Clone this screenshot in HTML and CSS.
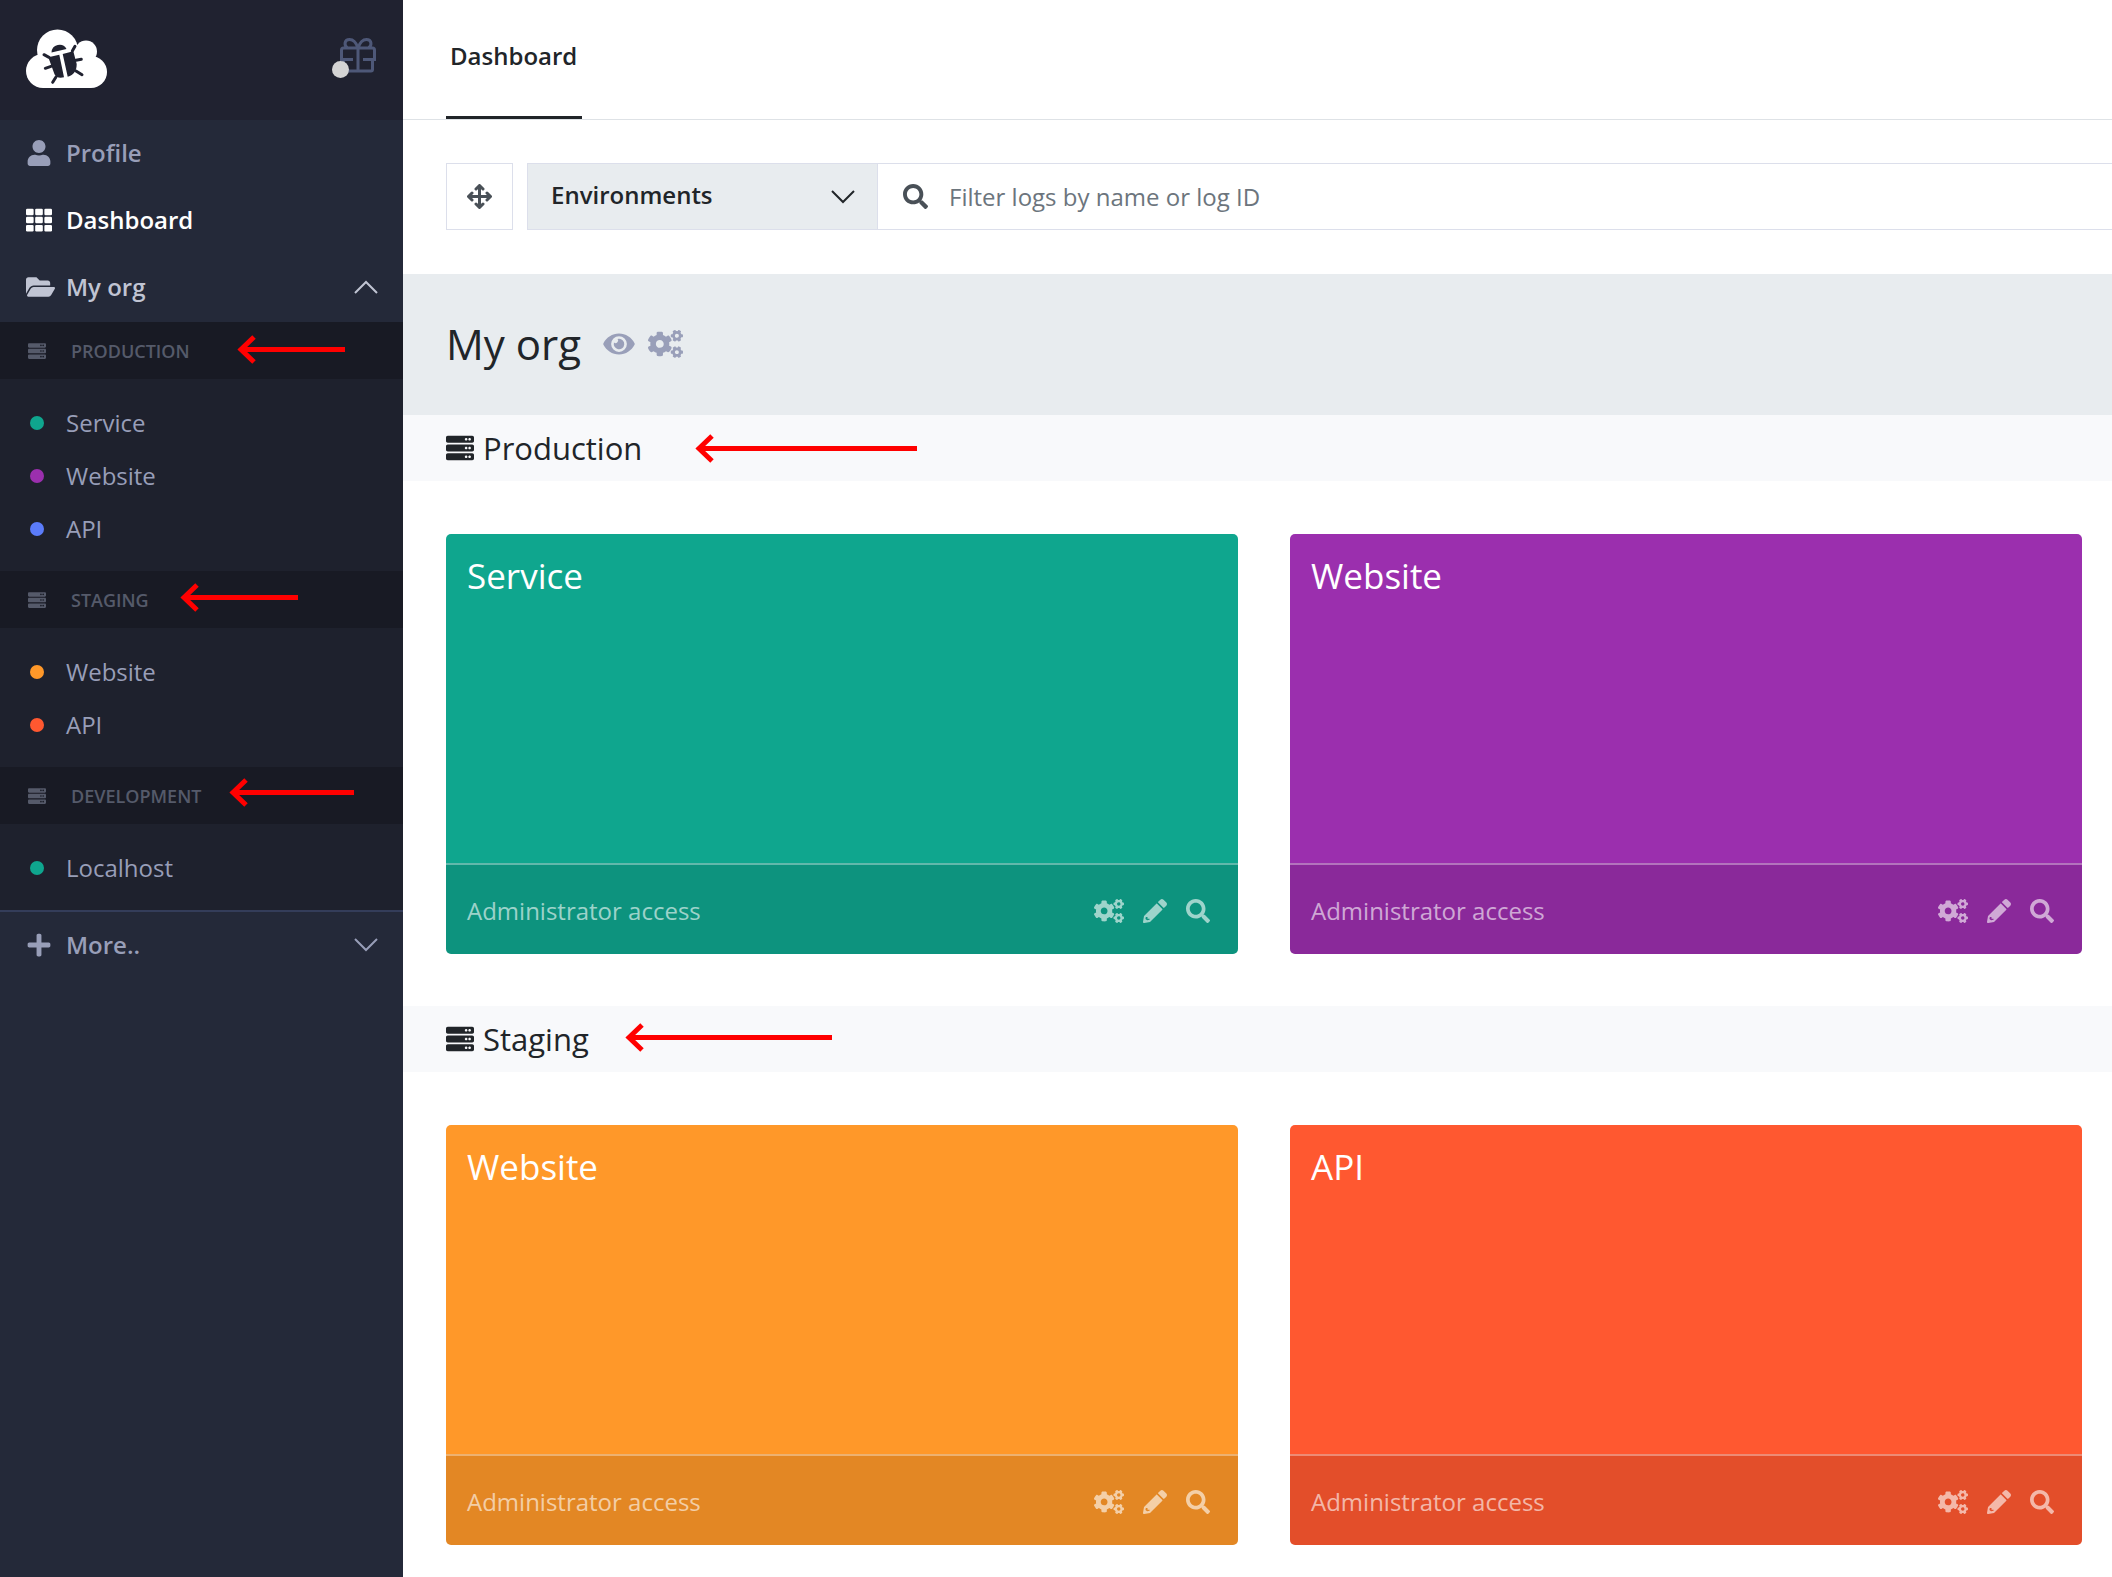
FILE: index.html
```html
<!DOCTYPE html>
<html lang="en">
<head>
<meta charset="utf-8">
<title>Dashboard</title>
<link rel="stylesheet" href="styles.css">
</head>
<body>
<svg class="sprite" aria-hidden="true">
  <symbol id="i-user" viewBox="0 0 448 512"><path d="M224 256c70.700 0 128-57.300 128-128S294.700 0 224 0 96 57.300 96 128s57.300 128 128 128zm89.600 32h-16.700c-22.200 10.200-46.900 16-72.900 16s-50.600-5.800-72.900-16h-16.700C60.200 288 0 348.200 0 422.400V464c0 26.500 21.500 48 48 48h352c26.500 0 48-21.500 48-48v-41.600c0-74.200-60.200-134.400-134.400-134.400z"/></symbol>
  <symbol id="i-grid" viewBox="0 0 512 512"><g id="grid-row"><rect y="32" width="150" height="128" rx="24"/><rect x="181" y="32" width="150" height="128" rx="24"/><rect x="362" y="32" width="150" height="128" rx="24"/></g><use href="#grid-row" y="160"/><use href="#grid-row" y="320"/></symbol>
  <symbol id="i-folder" viewBox="0 0 576 512"><path d="M572.694 292.093L500.270 416.248A63.997 63.997 0 0 1 444.989 448H45.025c-18.523 0-30.064-20.093-20.731-36.093l72.424-124.155A64 64 0 0 1 152 256h399.964c18.523 0 30.064 20.093 20.730 36.093zM152 224h328v-48c0-26.510-21.490-48-48-48H272l-64-64H48C21.490 64 0 85.490 0 112v278.046l69.077-118.418C86.214 242.250 117.989 224 152 224z"/></symbol>
  <symbol id="i-plus" viewBox="0 0 448 512"><path d="M416 208H272V64c0-17.670-14.330-32-32-32h-32c-17.670 0-32 14.330-32 32v144H32c-17.670 0-32 14.330-32 32v32c0 17.670 14.330 32 32 32h144v144c0 17.670 14.330 32 32 32h32c17.670 0 32-14.330 32-32V304h144c17.670 0 32-14.330 32-32v-32c0-17.670-14.330-32-32-32z"/></symbol>
  <symbol id="i-server" viewBox="0 0 512 512"><g id="server-unit"><path d="M480 160H32c-17.673 0-32-14.327-32-32V64c0-17.673 14.327-32 32-32h448c17.673 0 32 14.327 32 32v64c0 17.673-14.327 32-32 32zm-48-88c-13.255 0-24 10.745-24 24s10.745 24 24 24 24-10.745 24-24-10.745-24-24-24zm-64 0c-13.255 0-24 10.745-24 24s10.745 24 24 24 24-10.745 24-24-10.745-24-24-24z"/></g><use href="#server-unit" y="160"/><use href="#server-unit" y="320"/></symbol>
  <symbol id="i-search" viewBox="0 0 512 512"><path d="M505 442.700L405.300 343c-4.500-4.500-10.600-7-17-7H372c27.600-35.300 44-79.700 44-128C416 93.100 322.900 0 208 0S0 93.100 0 208s93.100 208 208 208c48.300 0 92.700-16.400 128-44v16.300c0 6.400 2.500 12.500 7 17l99.700 99.700c9.400 9.400 24.600 9.400 33.900 0l28.300-28.300c9.400-9.400 9.400-24.600.1-34zM208 336c-70.700 0-128-57.200-128-128 0-70.700 57.200-128 128-128 70.700 0 128 57.200 128 128 0 70.700-57.200 128-128 128z"/></symbol>
  <symbol id="i-eye" viewBox="0 0 576 512"><path d="M572.520 241.400C518.290 135.590 410.930 64 288 64S57.680 135.640 3.480 241.410a32.350 32.350 0 0 0 0 29.190C57.710 376.410 165.070 448 288 448s230.320-71.640 284.520-177.410a32.350 32.350 0 0 0 0-29.190zM288 400a144 144 0 1 1 144-144 143.930 143.930 0 0 1-144 144zm0-240a95.310 95.310 0 0 0-25.310 3.790 47.850 47.850 0 0 1-66.900 66.900A95.780 95.780 0 1 0 288 160z"/></symbol>
  <symbol id="i-cogs" viewBox="0 0 640 512"><path id="small-cog" d="M512.100 191l-8.200 14.300c-3 5.300-9.400 7.500-15.100 5.400-11.800-4.400-22.600-10.700-32.100-18.600-4.600-3.800-5.800-10.500-2.800-15.700l8.200-14.300c-6.900-8-12.300-17.300-15.900-27.400h-16.500c-6 0-11.200-4.300-12.200-10.300-2-12-2.100-24.600 0-37.100 1-6 6.200-10.400 12.200-10.400h16.500c3.600-10.100 9-19.400 15.900-27.400l-8.200-14.300c-3-5.200-1.900-11.900 2.800-15.700 9.500-7.900 20.400-14.200 32.100-18.600 5.700-2.100 12.100.1 15.100 5.400l8.200 14.300c10.500-1.900 21.200-1.900 31.700 0L552 6.300c3-5.300 9.400-7.500 15.100-5.400 11.800 4.400 22.600 10.700 32.100 18.600 4.600 3.800 5.800 10.500 2.800 15.700l-8.200 14.300c6.900 8 12.300 17.300 15.900 27.400h16.500c6 0 11.200 4.300 12.200 10.300 2 12 2.100 24.600 0 37.100-1 6-6.200 10.400-12.200 10.400h-16.500c-3.600 10.100-9 19.400-15.900 27.400l8.200 14.300c3 5.200 1.900 11.900-2.800 15.700-9.500 7.900-20.400 14.200-32.100 18.600-5.700 2.100-12.100-.1-15.100-5.400l-8.200-14.300c-10.400 1.900-21.200 1.900-31.700 0zm-10.500-58.800c38.500 29.600 82.400-14.300 52.800-52.800-38.500-29.700-82.400 14.300-52.800 52.800z"/><use href="#small-cog" y="299"/><path d="M386.300 286.100l33.700 16.800c10.100 5.800 14.500 18.100 10.500 29.100-8.900 24.200-26.400 46.400-42.600 65.800-7.400 8.900-20.200 11.100-30.300 5.300l-29.100-16.800c-16 13.700-34.600 24.600-54.900 31.700v33.600c0 11.600-8.300 21.600-19.700 23.600-24.600 4.200-50.400 4.400-75.900 0-11.500-2-20-11.900-20-23.600V418c-20.300-7.200-38.900-18-54.900-31.700L74 403c-10 5.800-22.900 3.600-30.300-5.300-16.200-19.400-33.300-41.600-42.200-65.700-4-10.900.4-23.200 10.500-29.100l33.300-16.800c-3.900-20.900-3.900-42.400 0-63.400L12 205.800c-10.100-5.800-14.600-18.100-10.500-29 8.900-24.200 26-46.400 42.200-65.800 7.400-8.900 20.200-11.100 30.300-5.300l29.100 16.800c16-13.700 34.600-24.600 54.900-31.700V57.100c0-11.500 8.200-21.500 19.600-23.500 24.600-4.200 50.500-4.400 76-.1 11.500 2 20 11.900 20 23.600v33.600c20.300 7.200 38.900 18 54.900 31.700l29.100-16.800c10-5.800 22.900-3.600 30.300 5.300 16.200 19.400 33.200 41.600 42.100 65.800 4 10.900.1 23.200-10 29.100l-33.700 16.800c3.900 21 3.900 42.500 0 63.500zm-117.600 21.100c59.200-77-28.700-164.900-105.700-105.700-59.200 77 28.700 164.900 105.700 105.700z"/></symbol>
  <symbol id="i-pencil" viewBox="0 0 512 512"><path fill-rule="evenodd" d="M497.900 142.100l-46.100 46.100c-4.700 4.700-12.300 4.700-17 0l-111-111c-4.700-4.700-4.700-12.300 0-17l46.100-46.100c18.700-18.700 49.100-18.700 67.900 0l60.100 60.100c18.800 18.700 18.800 49.100 0 67.900zM284.200 99.800L21.600 362.400.4 483.900c-2.900 16.400 11.400 30.600 27.800 27.800l121.500-21.300 262.600-262.600c4.700-4.700 4.700-12.300 0-17l-111-111c-4.800-4.700-12.400-4.700-17.100 0zM60 384h36v36h44v24l-52 10-36-28z"/></symbol>
  <symbol id="i-move" viewBox="0 0 25 25"><g fill="none" stroke="currentColor" stroke-linecap="round" stroke-linejoin="round" stroke-width="3"><path d="M12.500 3v19M3 12.500h19M9 5l3.500-3.500L16 5M9 20l3.500 3.500L16 20M5 9l-3.500 3.500L5 16M20 9l3.500 3.500L20 16"/></g></symbol>
  <symbol id="i-chevron" viewBox="0 0 24 14"><path d="M1 1l11 11L23 1" fill="none" stroke="currentColor"/></symbol>
</svg>

<div class="app">
  <aside class="sidebar">
    <header class="brand">
      <a href="#" class="logo" aria-label="Home">
        <svg width="82" height="60" viewBox="0 0 82 60">
          <g fill="#fff"><circle cx="17" cy="42" r="17"/><circle cx="31.500" cy="21" r="20.500"/><circle cx="60" cy="22.500" r="11"/><circle cx="65" cy="43" r="16"/><path d="M17 59V30l20-12 23 12 5 29z"/></g>
          <path fill="#202230" d="M25.500 23.500A8 8 0 0 1 40.500 20zM22.300 28.300l11-2.600 4.700 22.600c-5 1-8 0-9.500-3zM36.700 25l10.600-2.700L50.700 35c0 7-3 11-9 12.700z"/>
          <path fill="none" stroke="#202230" stroke-width="3" stroke-linecap="round" d="M18 25.700l5 2.600M19.300 39.300l5.700-2M26.700 53.300L30 48M49 17.300L46.300 22M55.300 30.300l-5.300 1M56 45.700L50 42"/>
        </svg>
      </a>
      <button class="gift" aria-label="What's new">
        <svg width="38" height="36" viewBox="0 0 38 36"><path fill="none" stroke="currentColor" stroke-width="3" d="M14 22.500H2.500V13q0-2 2-2h29q2 0 2 2v9.500H24M4.500 23v9.500q0 1.500 1.500 1.500h26q1.500 0 1.500-1.500V23M19 11v23M19 11C17 5 14 2.500 10.500 2.500 5.500 2.500 4.500 8 8.500 11M19 11c2-6 5-8.500 8.500-8.500 5 0 6 5.500 2 8.500"/></svg>
        <span class="gift-dot"></span>
      </button>
    </header>

    <nav class="menu">
      <a href="#" class="menu-item"><svg class="menu-icon"><use href="#i-user"/></svg>Profile</a>
      <a href="#" class="menu-item active"><svg class="menu-icon"><use href="#i-grid"/></svg>Dashboard</a>
      <a href="#" class="menu-item open"><svg class="menu-icon wide"><use href="#i-folder"/></svg>My org<svg class="caret up"><use href="#i-chevron"/></svg></a>
    </nav>

    <section class="env">
      <h2 class="env-title"><svg class="env-icon"><use href="#i-server"/></svg>Production
        <svg class="arrow arrow-side-1" width="108" height="29" viewBox="0 0 108 29"><path d="M4 14.500H108M17 2L4 14.500 17 27"/></svg></h2>
      <ul class="env-list">
        <li><a href="#"><span class="dot green"></span>Service</a></li>
        <li><a href="#"><span class="dot purple"></span>Website</a></li>
        <li><a href="#"><span class="dot blue"></span>API</a></li>
      </ul>
    </section>
    <section class="env">
      <h2 class="env-title"><svg class="env-icon"><use href="#i-server"/></svg>Staging
        <svg class="arrow arrow-side-2" width="118" height="29" viewBox="0 0 118 29"><path d="M4 14.500H118M17 2L4 14.500 17 27"/></svg></h2>
      <ul class="env-list">
        <li><a href="#"><span class="dot orange"></span>Website</a></li>
        <li><a href="#"><span class="dot red"></span>API</a></li>
      </ul>
    </section>
    <section class="env">
      <h2 class="env-title"><svg class="env-icon"><use href="#i-server"/></svg>Development
        <svg class="arrow arrow-side-3" width="125" height="29" viewBox="0 0 125 29"><path d="M4 14.500H125M17 2L4 14.500 17 27"/></svg></h2>
      <ul class="env-list">
        <li><a href="#"><span class="dot green"></span>Localhost</a></li>
      </ul>
    </section>
    <div class="more">
      <a href="#" class="menu-item"><svg class="menu-icon"><use href="#i-plus"/></svg>More..<svg class="caret"><use href="#i-chevron"/></svg></a>
    </div>
  </aside>

  <main class="main">
    <header class="tabs"><a href="#" class="tab">Dashboard</a></header>

    <div class="toolbar">
      <button class="move" aria-label="Rearrange"><svg><use href="#i-move"/></svg></button>
      <div class="filter">
        <div class="picker">
          <select aria-label="Environments"><option>Environments</option></select>
          <svg class="caret"><use href="#i-chevron"/></svg>
        </div>
        <label class="search"><svg><use href="#i-search"/></svg><input type="text" aria-label="Filter logs" placeholder="Filter logs by name or log ID"></label>
      </div>
    </div>

    <div class="org">
      <h1>My org</h1>
      <a href="#" aria-label="View"><svg class="org-eye"><use href="#i-eye"/></svg></a>
      <a href="#" aria-label="Settings"><svg class="org-cogs"><use href="#i-cogs"/></svg></a>
    </div>

    <h2 class="group"><svg class="group-icon"><use href="#i-server"/></svg>Production
      <svg class="arrow arrow-main-1" width="222" height="29" viewBox="0 0 222 29"><path d="M4 14.500H222M17 2L4 14.500 17 27"/></svg></h2>
    <div class="cards">
      <article class="card green">
        <h3>Service</h3>
        <footer><span>Administrator access</span><a href="#" aria-label="Settings"><svg class="wide"><use href="#i-cogs"/></svg></a><a href="#" aria-label="Edit"><svg><use href="#i-pencil"/></svg></a><a href="#" aria-label="Search"><svg><use href="#i-search"/></svg></a></footer>
      </article>
      <article class="card purple">
        <h3>Website</h3>
        <footer><span>Administrator access</span><a href="#" aria-label="Settings"><svg class="wide"><use href="#i-cogs"/></svg></a><a href="#" aria-label="Edit"><svg><use href="#i-pencil"/></svg></a><a href="#" aria-label="Search"><svg><use href="#i-search"/></svg></a></footer>
      </article>
    </div>

    <h2 class="group"><svg class="group-icon"><use href="#i-server"/></svg>Staging
      <svg class="arrow arrow-main-2" width="207" height="29" viewBox="0 0 207 29"><path d="M4 14.500H207M17 2L4 14.500 17 27"/></svg></h2>
    <div class="cards">
      <article class="card orange">
        <h3>Website</h3>
        <footer><span>Administrator access</span><a href="#" aria-label="Settings"><svg class="wide"><use href="#i-cogs"/></svg></a><a href="#" aria-label="Edit"><svg><use href="#i-pencil"/></svg></a><a href="#" aria-label="Search"><svg><use href="#i-search"/></svg></a></footer>
      </article>
      <article class="card red">
        <h3>API</h3>
        <footer><span>Administrator access</span><a href="#" aria-label="Settings"><svg class="wide"><use href="#i-cogs"/></svg></a><a href="#" aria-label="Edit"><svg><use href="#i-pencil"/></svg></a><a href="#" aria-label="Search"><svg><use href="#i-search"/></svg></a></footer>
      </article>
    </div>
  </main>
</div>
</body>
</html>
```
FILE: styles.css
```css
* { box-sizing: border-box; }

body {
  margin: 0;
  font: 400 24px/36px "Open Sans", sans-serif;
  color: #212529;
  background: #fff;
}

a { color: inherit; text-decoration: none; }
h1, h2, h3, ul { margin: 0; padding: 0; list-style: none; }
button, select, input { margin: 0; padding: 0; border: 0; border-radius: 0; background: none; font: inherit; color: inherit; }
svg { display: block; flex: none; fill: currentColor; }
.sprite { position: absolute; width: 0; height: 0; }

.app { display: flex; min-height: 100vh; }

.green { background: #0fa68e; }
.purple { background: #9b2fae; }
.blue { background: #5b7cfa; }
.orange { background: #ff9829; }
.red { background: #ff5830; }

/* Sidebar */
.sidebar { flex: none; width: 403px; background: #242939; color: #989eb8; }
.brand {
  display: flex;
  align-items: flex-start;
  justify-content: space-between;
  height: 120px;
  padding: 29px 26px 0;
  background: #202230;
}
.gift { position: relative; margin-top: 8px; color: #4e5878; }
.gift-dot {
  position: absolute;
  left: -7px;
  top: 24px;
  width: 17px;
  height: 17px;
  border-radius: 50%;
  background: #d4d4d4;
}

.menu { padding-bottom: 1px; }
.menu-item {
  display: flex;
  align-items: center;
  height: 67px;
  padding: 0 25px 1px 26px;
  font-weight: 600;
}
.menu-item.active { color: #fff; }
.menu-item.open { color: #c0c4d3; }
.menu-icon { width: 26px; height: 26px; margin-right: 14px; }
.menu-icon.wide { width: 29px; margin-right: 11px; }
.caret { width: 24px; height: 14px; margin-left: auto; stroke-width: 2; }
.caret.up { transform: rotate(180deg); }

.env { background: #1e212d; }
.env-title {
  position: relative;
  display: flex;
  align-items: center;
  height: 57px;
  padding-left: 28px;
  background: #181a24;
  color: #555a6a;
  font-size: 18px;
  font-weight: 600;
  text-transform: uppercase;
}
.env-icon { width: 18px; height: 18px; margin-right: 25px; }
.env-list { padding: 17px 0 16px; }
.env-list a { display: flex; align-items: center; height: 53px; padding-left: 30px; }
.dot { width: 14px; height: 14px; margin-right: 22px; border-radius: 50%; }
.more { border-top: 2px solid #343d5a; }

/* Hand-drawn pointers laid over the section titles */
.arrow { position: absolute; fill: none; stroke: #f00; stroke-width: 5; }
.arrow-side-1 { left: 237px; top: 13px; }
.arrow-side-2 { left: 180px; top: 12px; }
.arrow-side-3 { left: 229px; top: 11px; }
.arrow-main-1 { left: 292px; top: 19px; }
.arrow-main-2 { left: 222px; top: 17px; }

/* Main column */
.main { flex: 1; min-width: 0; }
.tabs { display: flex; height: 120px; padding-left: 43px; border-bottom: 1px solid #dee2e6; }
.tab { padding: 38px 5px 0 4px; border-bottom: 3px solid #212529; font-weight: 600; }

.toolbar { display: flex; gap: 14px; padding: 43px 0 44px 43px; }
.move {
  display: grid;
  place-items: center;
  width: 67px;
  height: 67px;
  border: 1px solid #dcdfeb;
  color: #495057;
}
.move svg { width: 25px; height: 25px; }
.filter { display: flex; flex: 1; height: 67px; border: 1px solid #dcdfeb; border-right: 0; }
.picker { display: flex; align-items: center; width: 350px; padding-right: 22px; border-right: 1px solid #dcdfeb; background: #e8ecef; }
.picker select { flex: 1; height: 65px; padding: 0 0 4px 23px; appearance: none; font-weight: 600; }
.search { display: flex; flex: 1; align-items: center; padding-left: 25px; color: #495057; }
.search svg { width: 25px; height: 25px; margin-right: 21px; }
.search input { flex: 1; height: 65px; outline: 0; }
.search input::placeholder { color: #6c757d; opacity: 1; }

.org { display: flex; align-items: center; height: 141px; padding: 0 0 2px 43px; background: #e8ecef; color: #999fb9; }
.org h1 { margin-right: 22px; color: #212529; font-size: 42px; line-height: 60px; font-weight: 400; }
.org-eye { width: 32px; height: 28px; margin-right: 13px; }
.org-cogs { width: 35px; height: 28px; }

.group {
  position: relative;
  display: flex;
  align-items: center;
  height: 66px;
  padding-left: 43px;
  background: #f8f9fb;
  font-size: 31px;
  font-weight: 400;
}
.group-icon { width: 28px; height: 28px; margin-right: 9px; }

.cards { display: grid; grid-template-columns: 1fr 1fr; gap: 52px; padding: 53px 30px 52px 43px; }
.card { display: flex; flex-direction: column; height: 420px; border-radius: 5px; overflow: hidden; color: #fff; }
.card h3 { flex: 1; padding: 20px 21px; font-size: 35px; line-height: 44px; font-weight: 400; }
.card footer {
  display: flex;
  align-items: center;
  height: 91px;
  padding: 3px 28px 0 21px;
  border-top: 2px solid rgba(255, 255, 255, .35);
  background: rgba(0, 0, 0, .11);
  color: rgba(255, 255, 255, .6);
}
.card footer span { margin-right: auto; }
.card footer svg { width: 24px; height: 24px; margin-left: 19px; }
.card footer svg.wide { width: 30px; }
```
